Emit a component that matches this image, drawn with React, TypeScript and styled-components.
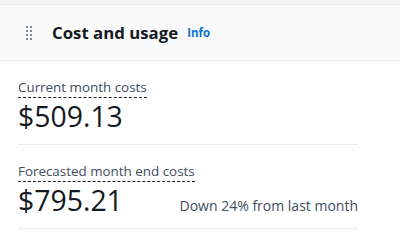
import React from "react";
import styled, { createGlobalStyle } from "styled-components";

const Global = createGlobalStyle`
  html, body { margin: 0; padding: 0; background: #ffffff; }
  body { font-family: "Open Sans", "Noto Sans", sans-serif; color: #16191f; }
`;

const TopStrip = styled.div`
  height: 4px;
  background: #f2f3f3;
  border-bottom: 1px solid #e9ebed;
`;

const Header = styled.header`
  height: 56px;
  box-sizing: border-box;
  background: #fafafa;
  border-bottom: 1px solid #e9ebed;
  display: flex;
  align-items: center;
  padding-left: 26px;
`;

const Handle = styled.div`
  display: grid;
  grid-template-columns: repeat(2, 2px);
  grid-auto-rows: 2px;
  column-gap: 2px;
  row-gap: 2px;
  margin-right: 20px;
  span { background: #7d8998; }
`;

const Title = styled.h2`
  margin: 0;
  font-size: 16.8px;
  font-weight: 700;
  color: #16191f;
`;

const InfoLink = styled.a`
  margin-left: 9px;
  font-size: 11.5px;
  font-weight: 700;
  color: #0972d3;
  text-decoration: none;
`;

const Body = styled.div`
  padding: 14px 0 0 18px;
  width: 340px;
`;

const Metric = styled.div`
  border-bottom: 1px solid #e9ebed;
  padding-bottom: 10px;
  margin-bottom: 14px;
`;

const Label = styled.span`
  display: inline-block;
  font-size: 13.4px;
  color: #414d5c;
  border-bottom: 1px dashed #16191f;
  line-height: 20px;
`;

const ValueRow = styled.div`
  display: flex;
  align-items: baseline;
  justify-content: space-between;
`;

const Value = styled.div`
  font-size: 28.4px;
  line-height: 36px;
  color: #16191f;
`;

const Note = styled.div`
  font-size: 14px;
  color: #414d5c;
`;

export default function App() {
  return (
    <>
      <Global />
      <TopStrip />
      <Header>
        <Handle>
          {Array.from({ length: 8 }).map((_, i) => (
            <span key={i} />
          ))}
        </Handle>
        <Title>Cost and usage</Title>
        <InfoLink href="#">Info</InfoLink>
      </Header>
      <Body>
        <Metric>
          <Label>Current month costs</Label>
          <ValueRow>
            <Value>$509.13</Value>
          </ValueRow>
        </Metric>
        <Metric>
          <Label>Forecasted month end costs</Label>
          <ValueRow>
            <Value>$795.21</Value>
            <Note>Down 24% from last month</Note>
          </ValueRow>
        </Metric>
      </Body>
    </>
  );
}
